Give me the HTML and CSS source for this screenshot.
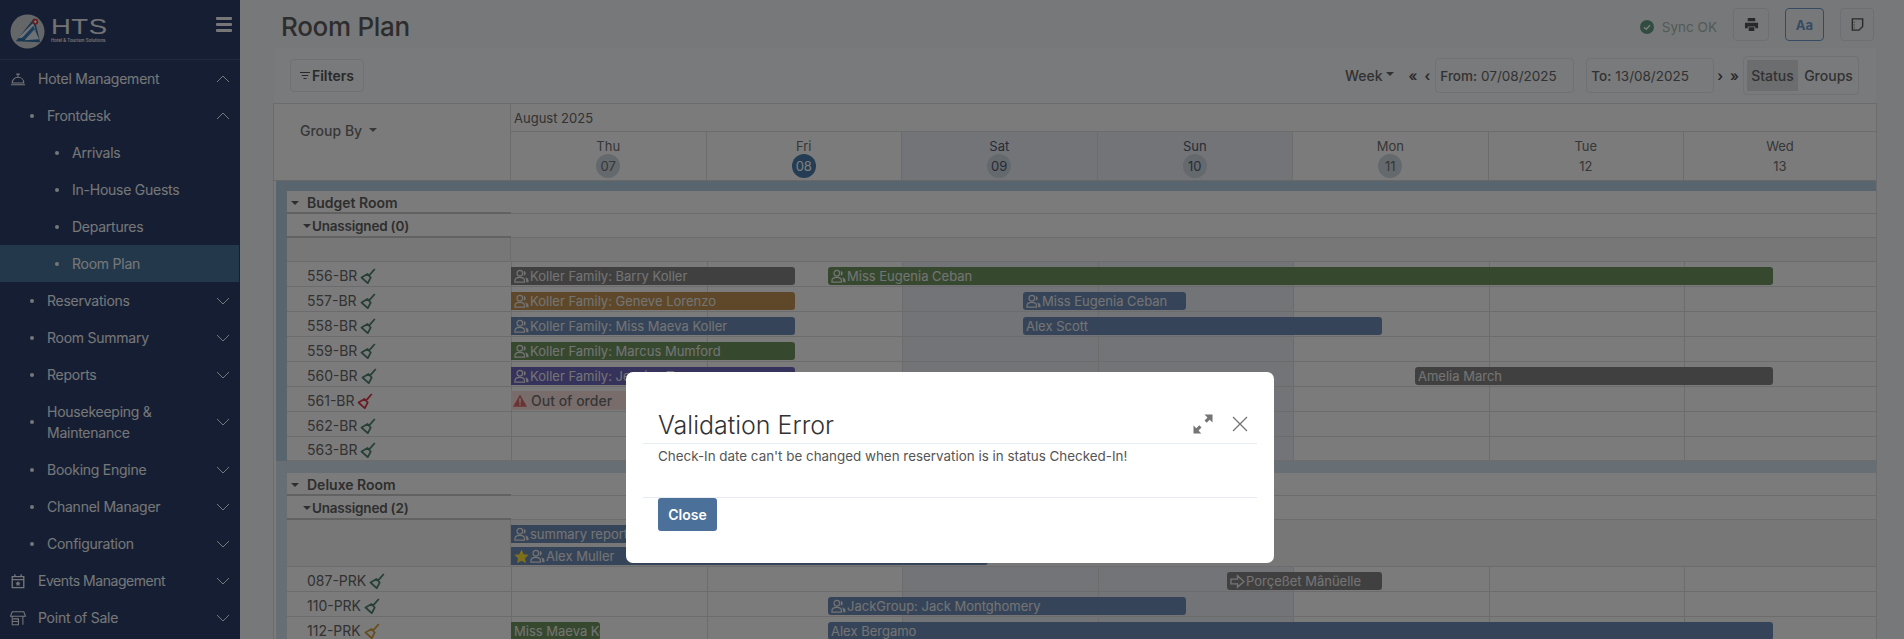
FILE: index.html
```html
<!DOCTYPE html>
<html lang="en">
<head>
<meta charset="utf-8">
<title>Room Plan</title>
<link rel="stylesheet" href="styles.css">
</head>
<body>
<svg class="defs" aria-hidden="true">
  <symbol id="broom" viewBox="0 0 16 16"><path d="M1.500 9.500 7.500 6l3.200 3.600-3 5.600z M9 7.600 14.800 1" fill="none" stroke="currentColor" stroke-width="1.800" stroke-linejoin="round"/></symbol>
  <symbol id="guests" viewBox="0 0 16 16"><circle cx="6.200" cy="4.500" r="3" fill="none" stroke="currentColor" stroke-width="1.300"/><path d="M1 14v-1.500C1 10 3 9 6.200 9s5 1 5 3.500V14z" fill="none" stroke="currentColor" stroke-width="1.300"/><path d="M10.500 1.800a2.800 2.800 0 0 1 0 5.400zM12 9c2 .3 3.500 1.400 3.500 3.500V14H13c0-2-.2-3.500-1-5z" fill="currentColor"/></symbol>
  <symbol id="chev-d" viewBox="0 0 14 8"><path d="M1 1l6 6 6-6" fill="none" stroke="currentColor" stroke-width="1"/></symbol>
  <symbol id="chev-u" viewBox="0 0 14 8"><path d="M1 7l6-6 6 6" fill="none" stroke="currentColor" stroke-width="1"/></symbol>
</svg>

<div class="page">
  <aside class="sidebar">
    <div class="brand">
      <svg class="logo" viewBox="0 0 36 36">
        <circle cx="18" cy="18" r="17.500" fill="#cfd0d2"/>
        <path d="M25 4 31 29 6 28z" fill="#2f6ea5"/>
        <path d="M24 9 8 25l20-3z" fill="#e8edf2"/>
        <path d="M24 12 11 26l18-2z" fill="#3d7db5"/>
        <path d="M25 16 15 27l15-1z" fill="#dfe8f0"/>
        <circle cx="26" cy="8" r="3" fill="#d8343c"/>
        <path d="M24.500 8h3M26 6.500v3" stroke="#fff" stroke-width="1"/>
      </svg>
      <div class="brand-text">
        <span class="brand-name">HTS</span>
        <span class="brand-sub">Hotel &amp; Tourism Solutions</span>
      </div>
      <div class="burger"><span></span><span></span><span></span></div>
    </div>
    <nav class="menu">
      <a class="item l0">
        <svg class="ico" viewBox="0 0 18 18"><path d="M1 15.500h16M2.500 13.500C2.500 9.500 5.500 7 9 7s6.500 2.500 6.500 6.500zM9 7V4M7 3.500h4" fill="none" stroke="currentColor" stroke-width="1.200"/></svg>
        <span class="label">Hotel Management</span><svg class="chev"><use href="#chev-u"/></svg>
      </a>
      <a class="item l1"><span class="dot"></span><span class="label">Frontdesk</span><svg class="chev"><use href="#chev-u"/></svg></a>
      <a class="item l2"><span class="dot"></span><span class="label">Arrivals</span></a>
      <a class="item l2"><span class="dot"></span><span class="label">In-House Guests</span></a>
      <a class="item l2"><span class="dot"></span><span class="label">Departures</span></a>
      <a class="item l2 active"><span class="dot"></span><span class="label">Room Plan</span></a>
      <a class="item l1"><span class="dot"></span><span class="label">Reservations</span><svg class="chev"><use href="#chev-d"/></svg></a>
      <a class="item l1"><span class="dot"></span><span class="label">Room Summary</span><svg class="chev"><use href="#chev-d"/></svg></a>
      <a class="item l1"><span class="dot"></span><span class="label">Reports</span><svg class="chev"><use href="#chev-d"/></svg></a>
      <a class="item l1"><span class="dot"></span><span class="label">Housekeeping &amp;<br>Maintenance</span><svg class="chev"><use href="#chev-d"/></svg></a>
      <a class="item l1"><span class="dot"></span><span class="label">Booking Engine</span><svg class="chev"><use href="#chev-d"/></svg></a>
      <a class="item l1"><span class="dot"></span><span class="label">Channel Manager</span><svg class="chev"><use href="#chev-d"/></svg></a>
      <a class="item l1"><span class="dot"></span><span class="label">Configuration</span><svg class="chev"><use href="#chev-d"/></svg></a>
      <a class="item l0">
        <svg class="ico" viewBox="0 0 18 18"><path d="M2.500 4h13v12.500h-13zM2.500 7.500h13M5.500 1.500V4M12.500 1.500V4" fill="none" stroke="currentColor" stroke-width="1.500"/><path d="M9 9l.9 1.800 2 .3-1.400 1.400.3 2L9 13.600l-1.800.9.300-2-1.400-1.400 2-.3z" fill="currentColor"/></svg>
        <span class="label narrow">Events Management</span><svg class="chev"><use href="#chev-d"/></svg>
      </a>
      <a class="item l0">
        <svg class="ico" viewBox="0 0 18 18"><path d="M2.500 2h13l2 5H.5zM2.500 7v9.500h7V10h-6M14.500 7v9.500M3 13h6.500" fill="none" stroke="currentColor" stroke-width="1.200"/></svg>
        <span class="label">Point of Sale</span><svg class="chev"><use href="#chev-d"/></svg>
      </a>
    </nav>
  </aside>

  <main class="main">
    <header class="topbar">
      <h1 class="title">Room Plan</h1>
      <div class="top-actions">
        <span class="sync">
          <svg class="sync-ico" viewBox="0 0 14 14"><circle cx="7" cy="7" r="7" fill="currentColor"/><path d="M4 7.200 6.200 9.300 10 5.200" fill="none" stroke="#fff" stroke-width="1.400"/></svg>
          Sync OK
        </span>
        <button class="tool tool-print" type="button"><svg viewBox="0 0 16 16" class="tool-ico"><path d="M4 1h8v3.500H4zM1 6h14v6h-3v-2H4v2H1zM5 11h6v4H5z" fill="currentColor"/></svg></button>
        <button class="tool tool-aa" type="button">Aa</button>
        <button class="tool tool-note" type="button"><svg viewBox="0 0 16 16" class="tool-ico"><path d="M2.500 2h11v8l-4 4h-7z" fill="none" stroke="currentColor" stroke-width="1.500"/><path d="M4.500 5v1.200M4.500 8v1.200M4.500 11v1" stroke="currentColor" stroke-width="1"/></svg></button>
      </div>
    </header>

    <section class="card">
      <div class="toolbar">
        <button class="btn-filter" type="button"><svg class="filter-ico" viewBox="0 0 10 8"><path d="M0 .5h10M1.800 3.500h6.400M3.500 6.500h3" stroke="currentColor" stroke-width="1"/></svg>Filters</button>
        <div class="range">
          <span class="week">Week<i class="caret"></i></span>
          <span class="pager pager-l"><b>«</b><b>‹</b></span>
          <span class="date date-from"><strong>From:</strong> 07/08/2025</span>
          <span class="date date-to"><strong>To:</strong> 13/08/2025</span>
          <span class="pager pager-r"><b>›</b><b>»</b></span>
          <span class="segment"><span class="seg on">Status</span><span class="seg">Groups</span></span>
        </div>
      </div>

      <div class="plan">
        <div class="plan-head">
          <div class="group-by">Group By<i class="caret"></i></div>
          <div class="head-right">
            <div class="month">August 2025</div>
            <div class="days">
              <div class="day"><span class="dn">Thu</span><span class="num round">07</span></div>
              <div class="day"><span class="dn">Fri</span><span class="num round today">08</span></div>
              <div class="day we"><span class="dn">Sat</span><span class="num round">09</span></div>
              <div class="day we"><span class="dn">Sun</span><span class="num round">10</span></div>
              <div class="day"><span class="dn">Mon</span><span class="num round">11</span></div>
              <div class="day"><span class="dn">Tue</span><span class="num">12</span></div>
              <div class="day"><span class="dn">Wed</span><span class="num">13</span></div>
            </div>
          </div>
        </div>

        <div class="band"></div>
        <div class="group">
          <div class="row head-row"><div class="lbl grp"><i class="caret"></i>Budget Room</div></div>
          <div class="row head-row"><div class="lbl unas"><i class="caret"></i>Unassigned (0)</div></div>
          <div class="row empty"><div class="lbl"></div></div>

          <div class="row room"><div class="lbl">556-BR <svg class="broom ok"><use href="#broom"/></svg></div><i></i><i></i><i class="we"></i><i class="we"></i><i></i><i></i><i></i>
            <div class="bar gray start" style="left:224px;width:284px"><svg class="g"><use href="#guests"/></svg>Koller Family: Barry Koller</div>
            <div class="bar green" style="left:541px;width:945px"><svg class="g"><use href="#guests"/></svg>Miss Eugenia Ceban</div>
          </div>
          <div class="row room"><div class="lbl">557-BR <svg class="broom ok"><use href="#broom"/></svg></div><i></i><i></i><i class="we"></i><i class="we"></i><i></i><i></i><i></i>
            <div class="bar orange start" style="left:224px;width:284px"><svg class="g"><use href="#guests"/></svg>Koller Family: Geneve Lorenzo</div>
            <div class="bar blue" style="left:736px;width:163px"><svg class="g"><use href="#guests"/></svg>Miss Eugenia Ceban</div>
          </div>
          <div class="row room"><div class="lbl">558-BR <svg class="broom ok"><use href="#broom"/></svg></div><i></i><i></i><i class="we"></i><i class="we"></i><i></i><i></i><i></i>
            <div class="bar blue start" style="left:224px;width:284px"><svg class="g"><use href="#guests"/></svg>Koller Family: Miss Maeva Koller</div>
            <div class="bar blue" style="left:736px;width:359px">Alex Scott</div>
          </div>
          <div class="row room"><div class="lbl">559-BR <svg class="broom ok"><use href="#broom"/></svg></div><i></i><i></i><i class="we"></i><i class="we"></i><i></i><i></i><i></i>
            <div class="bar green start" style="left:224px;width:284px"><svg class="g"><use href="#guests"/></svg>Koller Family: Marcus Mumford</div>
          </div>
          <div class="row room"><div class="lbl">560-BR <svg class="broom ok"><use href="#broom"/></svg></div><i></i><i></i><i class="we"></i><i class="we"></i><i></i><i></i><i></i>
            <div class="bar purple start" style="left:224px;width:284px"><svg class="g"><use href="#guests"/></svg>Koller Family: Jessica Turner</div>
            <div class="bar gray" style="left:1128px;width:358px">Amelia March</div>
          </div>
          <div class="row room"><div class="lbl">561-BR <svg class="broom bad"><use href="#broom"/></svg></div><i></i><i></i><i class="we"></i><i class="we"></i><i></i><i></i><i></i>
            <div class="bar ooo start" style="left:224px;width:320px"><svg class="warn" viewBox="0 0 16 14"><path d="M8 0l8 14H0z" fill="currentColor"/><path d="M8 4.500v5M8 10.800v1.500" stroke="#fff" stroke-width="1.500"/></svg>Out of order</div>
          </div>
          <div class="row room"><div class="lbl">562-BR <svg class="broom ok"><use href="#broom"/></svg></div><i></i><i></i><i class="we"></i><i class="we"></i><i></i><i></i><i></i></div>
          <div class="row room last"><div class="lbl">563-BR <svg class="broom ok"><use href="#broom"/></svg></div><i></i><i></i><i class="we"></i><i class="we"></i><i></i><i></i><i></i></div>
        </div>

        <div class="band band-alt"></div>
        <div class="group group-alt">
          <div class="row head-row"><div class="lbl grp"><i class="caret"></i>Deluxe Room</div></div>
          <div class="row head-row"><div class="lbl unas"><i class="caret"></i>Unassigned (2)</div></div>
          <div class="row empty tall"><div class="lbl"></div>
            <div class="bar blue start b-top" style="left:224px;width:400px"><svg class="g"><use href="#guests"/></svg>summary report</div>
            <div class="bar blue start b-low" style="left:224px;width:477px"><svg class="star" viewBox="0 0 16 16"><path d="M8 .5l2.300 5 5.400.6-4 3.700 1.100 5.400L8 12.500l-4.800 2.700 1.100-5.400-4-3.700 5.400-.6z" fill="currentColor"/></svg><svg class="g"><use href="#guests"/></svg>Alex Muller</div>
          </div>
          <div class="row room"><div class="lbl">087-PRK <svg class="broom ok"><use href="#broom"/></svg></div><i></i><i></i><i class="we"></i><i class="we"></i><i></i><i></i><i></i>
            <div class="bar gray" style="left:940px;width:155px"><svg class="g" viewBox="0 0 16 16"><path d="M1 5.500h7V2l7 6-7 6v-3.500H1z" fill="none" stroke="currentColor" stroke-width="1.500"/></svg>Porçeßet Mânüelle</div>
          </div>
          <div class="row room"><div class="lbl">110-PRK <svg class="broom ok"><use href="#broom"/></svg></div><i></i><i></i><i class="we"></i><i class="we"></i><i></i><i></i><i></i>
            <div class="bar blue" style="left:541px;width:358px"><svg class="g"><use href="#guests"/></svg>JackGroup: Jack Montghomery</div>
          </div>
          <div class="row room"><div class="lbl">112-PRK <svg class="broom warm"><use href="#broom"/></svg></div><i></i><i></i><i class="we"></i><i class="we"></i><i></i><i></i><i></i>
            <div class="bar green start" style="left:224px;width:89px">Miss Maeva Koller</div>
            <div class="bar blue" style="left:541px;width:945px">Alex Bergamo</div>
          </div>
        </div>
      </div>
    </section>
  </main>
</div>

<div class="backdrop">
  <div class="modal" role="dialog">
    <div class="modal-head">
      <h2 class="modal-title">Validation Error</h2>
      <svg class="m-expand" viewBox="0 0 20 20"><path d="M19.500.500v8l-2.800-2.800-3 3-2.200-2.200 3-3L11.500.500zM.500 19.500v-8l2.800 2.800 3-3 2.200 2.200-3 3 2.800 3z" fill="currentColor"/></svg>
      <svg class="m-close" viewBox="0 0 16 16"><path d="M1 1l14 14M15 1 1 15" stroke="currentColor" stroke-width="1.300"/></svg>
    </div>
    <div class="modal-body">Check-In date can't be changed when reservation is in status Checked-In!</div>
    <div class="modal-foot"><button class="btn-close" type="button">Close</button></div>
  </div>
</div>
</body>
</html>
```

FILE: styles.css
```css
* { box-sizing: border-box; }
html, body { margin: 0; height: 100%; overflow: hidden; }
body { font-family: Inter, "Noto Sans", sans-serif; font-size: 14px; color: #555; background: #f3f5f9; }
.defs { display: none; }
h1, h2 { margin: 0; font-weight: 400; }
button { font-family: inherit; }

.page { display: flex; height: 639px; overflow: hidden; }

/* sidebar */
.sidebar { flex: 0 0 240px; background: #2c3e66; color: #f0f2f6; }
.brand { height: 60px; display: flex; align-items: flex-start; padding: 14px 8px 0 10px; border-bottom: 1px solid #46587e; }
.logo { width: 35px; height: 35px; flex: none; }
.brand-text { margin-left: 6px; display: flex; flex-direction: column; color: #e8e8ea; }
.brand-name { font-family: "Liberation Sans", sans-serif; font-size: 22px; line-height: 22px; letter-spacing: .4px; transform: scaleX(1.25); transform-origin: left; margin-top: 2px; }
.brand-sub { font-size: 4.400px; line-height: 6px; font-weight: 600; white-space: nowrap; }
.burger { margin-left: auto; margin-top: 3px; width: 16px; display: flex; flex-direction: column; gap: 3.500px; }
.burger span { height: 2.500px; background: #f2f2f2; border-radius: 1px; }

.item { display: flex; align-items: center; position: relative; min-height: 37px; padding: 8px 10px 8px 0; line-height: 21px; letter-spacing: -.25px; }
.item .label { flex: 1; }
.item .narrow { letter-spacing: -.45px; }
.l0 { padding-left: 10px; }
.l0 .ico { width: 16px; height: 16px; margin-right: 12px; flex: none; }
.l1 { padding-left: 30px; }
.l2 { padding-left: 55px; }
.dot { width: 4px; height: 4px; border-radius: 50%; background: currentColor; margin-right: 13px; flex: none; }
.chev { width: 14px; height: 8px; flex: none; }
.active { background: #487299; width: 239px; }

/* main */
.main { flex: 1; min-width: 0; padding-right: 27px; }
.topbar { height: 47px; display: flex; align-items: flex-start; }
.title { margin: 9px 0 0 41px; font-size: 26px; line-height: 36px; font-weight: 500; color: #5c5c5c; letter-spacing: -.3px; }
.top-actions { margin-left: auto; display: flex; align-items: center; margin-top: 8px; margin-right: 3px; }
.sync { display: flex; align-items: center; color: #a3b9ae; font-size: 13.500px; margin-right: 16px; margin-top: 4px; }
.sync-ico { width: 14px; height: 14px; margin-right: 8px; color: #689c86; }
.tool { height: 33px; background: transparent; border: 1px solid #dfe2e8; border-radius: 4px; color: #555; padding: 0; display: flex; align-items: center; justify-content: center; }
.tool-print { width: 36px; margin-right: 16px; }
.tool-aa { width: 39px; margin-right: 16px; border-color: #6f9acb; color: #6f9acb; font-weight: 700; font-size: 13px; }
.tool-note { width: 34px; }
.tool-ico { width: 15px; height: 15px; }

.card { width: 1604px; margin-left: 33px; }
.toolbar { height: 56px; display: flex; align-items: center; padding: 0 17px 0 16px; background: #f6f8fb; border: 1px solid #f0f2f6; border-bottom: 0; }
.btn-filter { height: 33px; width: 74px; background: transparent; border: 1px solid #e4e6ea; border-radius: 4px; color: #555; font-size: 14px; font-weight: 600; display: flex; align-items: center; justify-content: center; gap: 2px; padding: 0; }
.filter-ico { width: 10px; height: 8px; }
.range { margin-left: auto; display: flex; align-items: center; color: #666; }
.week { font-weight: 500; margin-right: 15px; display: flex; align-items: center; }
.caret { display: inline-block; width: 0; height: 0; border: 4px solid transparent; border-top: 4px solid currentColor; border-bottom: 0; }
.week .caret { margin-left: 3px; margin-top: -3px; }
.pager { display: flex; gap: 7px; color: #555; }
.pager b { font-weight: 600; font-size: 14px; }
.pager-l { margin-right: 5px; }
.pager-r { margin: 0 4px 0 3px; }
.date { height: 35px; display: flex; align-items: center; gap: 4px; border: 1px solid #e4e6ea; border-radius: 4px; padding-left: 4px; font-size: 13.500px; }
.date strong { font-weight: 500; }
.date-from { width: 139px; margin-right: 12px; }
.date-to { width: 128px; }
.segment { height: 39px; width: 116px; display: flex; align-items: center; border: 1px solid #e4e6ea; border-radius: 4px; padding: 3px; font-weight: 500; }
.seg { height: 31px; width: 51px; line-height: 31px; text-align: center; flex: none; }
.seg + .seg { width: 57px; margin-left: 2px; }
.seg.on { background: #dcdee2; }

/* plan */
.plan { background: #fbfbfb; border: 1px solid #dcdcdc; }
.plan-head { display: flex; height: 77px; border-bottom: 1px solid #d4d4d4; }
.group-by { width: 237px; flex: none; padding: 17px 0 0 26px; border-right: 1px solid #dcdcdc; font-weight: 500; line-height: 20px; color: #707070; display: flex; align-items: flex-start; }
.group-by .caret { margin: 7px 0 0 7px; }
.head-right { flex: 1; }
.month { height: 28px; line-height: 29px; padding-left: 3px; font-size: 13px; border-bottom: 1px solid #dcdcdc; color: #666; }
.days { display: grid; grid-template-columns: repeat(6, 195.500px) 1fr; height: 48px; }
.day { display: flex; flex-direction: column; align-items: center; border-right: 1px solid #dcdcdc; font-size: 13px; color: #707070; padding-top: 5px; line-height: 18px; }
.day:last-child { border-right: 0; }
.day.we { background: #eaedf4; color: #4f5a72; }
.num { height: 24px; min-width: 24px; line-height: 24px; text-align: center; margin-top: -1px; }
.round { background: #ccd6de; border-radius: 50%; }
.today { background: #4c7dac; color: #fff; }

.band { height: 10px; background: #b4cfe2; margin-left: 2px; }
.band-alt { height: 12px; background: #d4e2ec; }
.group { margin-left: 2px; border-left: 11px solid #b4cfe2; }
.group-alt { border-left-color: #d4e2ec; }

.row { position: relative; height: 25px; display: grid; grid-template-columns: 224px repeat(6, 195.500px) 1fr; border-bottom: 1px solid #dcdcdc; }
.row > i { border-left: 1px solid #dcdcdc; }
.row > i.we { background: #eaedf4; }
.lbl { display: flex; align-items: center; padding: 2px 0 0 20px; color: #666; white-space: pre; }
.head-row { height: 24px; }
.head-row:first-child { height: 23px; }
.head-row .lbl { font-weight: 600; border-bottom: 2px solid #c8c8c8; margin-bottom: -1px; padding-left: 4px; color: #5e5e5e; }
.grp .caret { margin-right: 8px; }
.unas { font-size: 13.500px; letter-spacing: -.2px; }
.unas .caret { margin: 0 1px 0 12px; }
.empty { background: #f3f3f3; height: 24px; }
.empty .lbl { border-right: 1px solid #dcdcdc; }
.tall { height: 47px; }
.last { height: 24px; overflow: hidden; }
.broom { width: 16px; height: 16px; margin: 1px 0 0 -1px; }
.ok { color: #4f8270; }
.bad { color: #d83a48; }
.warm { color: #d0a040; }

.bar { position: absolute; top: 5px; height: 18px; line-height: 18px; border-radius: 3px; padding-left: 3px; color: #ececec; font-size: 13px; white-space: nowrap; overflow: hidden; display: flex; align-items: center; }
.start { border-radius: 0 3px 3px 0; }
.gray { background: #848484; }
.green { background: #6f9560; }
.orange { background: #bf9455; }
.blue { background: #6e8cb6; }
.purple { background: #6c66bc; }
.ooo { background: #f6dfdd; color: #707070; font-size: 14px; font-weight: 500; padding-left: 2px; top: 4px; height: 19px; }
.g { width: 15px; height: 15px; margin-right: 1px; flex: none; }
.warn { width: 14px; height: 13px; margin-right: 4px; color: #d86a6a; flex: none; }
.star { width: 15px; height: 15px; margin-right: 1px; color: #ffe23d; flex: none; }
.b-top { top: 5px; }
.b-low { top: 27px; }

/* modal */
.backdrop { position: fixed; inset: 0; background: rgba(0, 0, 0, .51); padding: 372px 0 0 626px; }
.modal { width: 648px; height: 191px; background: #fff; border-radius: 7px; padding: 0 17px; }
.modal-head { height: 72px; padding: 38px 8px 0 15px; border-bottom: 1px solid #e8ebf2; display: flex; align-items: flex-start; color: #757575; }
.modal-title { font-size: 25px; line-height: 30px; color: #333; font-weight: 300; flex: 1; }
.m-expand { width: 20px; height: 20px; margin-top: 4px; margin-right: 19px; }
.m-close { width: 16px; height: 16px; margin-top: 6px; margin-right: 1px; }
.modal-body { height: 54px; padding: 3px 15px 0; font-size: 13.400px; line-height: 18px; color: #555; border-bottom: 1px solid #e8ebf2; }
.modal-foot { padding: 0 15px; }
.btn-close { width: 59px; height: 33px; border: 0; border-radius: 3px; background: #4b7099; color: #fff; font-size: 14px; font-weight: 600; padding: 0; }
```
